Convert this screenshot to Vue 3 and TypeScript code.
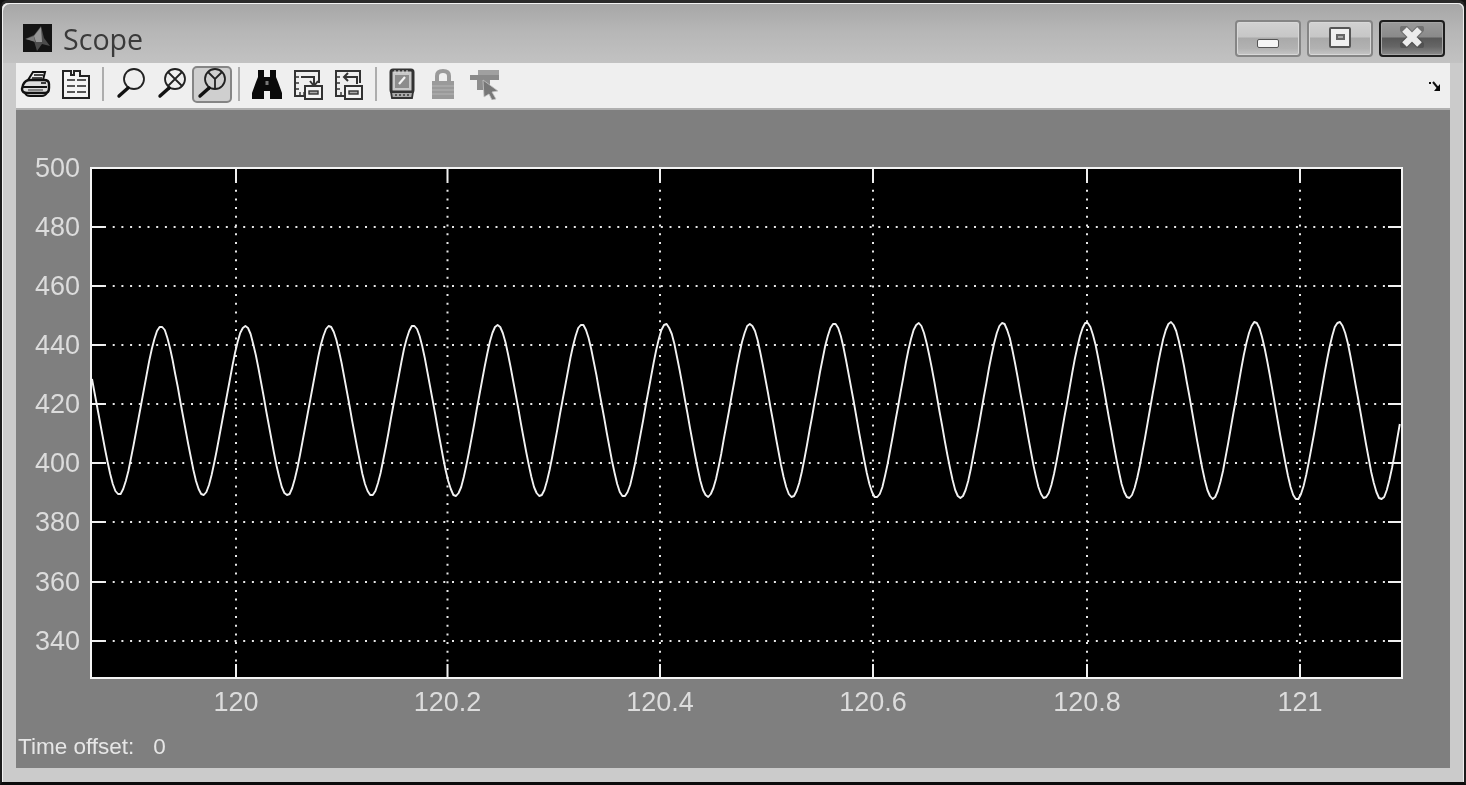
<script setup lang="ts">
const plot = { left: 91, right: 1402, top: 168, bottom: 678 };
const xTicks = [
  { x: 236, label: '120' },
  { x: 447.5, label: '120.2' },
  { x: 660, label: '120.4' },
  { x: 873, label: '120.6' },
  { x: 1087, label: '120.8' },
  { x: 1300, label: '121' },
];
const yTicks = [
  { y: 168, label: '500' },
  { y: 227, label: '480' },
  { y: 286, label: '460' },
  { y: 345, label: '440' },
  { y: 404, label: '420' },
  { y: 463, label: '400' },
  { y: 522, label: '380' },
  { y: 582, label: '360' },
  { y: 641, label: '340' },
];
function buildWave(): string {
  const pts: string[] = [];
  for (let x = plot.left + 1; x <= plot.right - 1; x += 2.6) {
    const t = (x - plot.left) / (plot.right - plot.left);
    const amp = 84 + 5 * t;
    const th = (2 * Math.PI * (x - 161)) / 84.15;
    const y = 410.5 - (amp * (Math.cos(th) + 0.035 * Math.cos(3 * th))) / 1.035;
    pts.push(`${x.toFixed(1)},${Math.round(y)}`);
  }
  return pts.join(' ');
}
const wave = buildWave();
</script>

<template>
  <div class="window">
    <header class="titlebar">
      <svg class="app-icon" viewBox="0 0 29 28" width="29" height="28">
        <rect width="29" height="28" fill="#141414" />
        <path d="M2 15 L11 11 L18 2 L21 14 L27 22 L19 20 L14 27 L11 17 Z" fill="#4c4c4c" />
        <path d="M11 12 L18 3 L19 18 L13 18 Z" fill="#969696" />
        <path d="M3 15 L11 12 L12 18 Z" fill="#7c7c7c" />
      </svg>
      <span class="title">Scope</span>
      <div class="controls">
        <button class="ctl">
          <span class="min-glyph"></span>
        </button>
        <button class="ctl">
          <span class="max-glyph"><span class="max-inner"></span></span>
        </button>
        <button class="ctl close">
          <svg viewBox="0 0 24 22" width="24" height="22">
            <path d="M4 3 L20 19 M20 3 L4 19" stroke="#333" stroke-width="8.5" stroke-linecap="round" opacity=".35" />
            <path d="M4.5 3.5 L19.5 18.5 M19.5 3.5 L4.5 18.5" stroke="#ececec" stroke-width="6.5" />
          </svg>
        </button>
      </div>
    </header>

    <nav class="toolbar">
      <span class="tool first">
        <svg viewBox="0 0 32 32" width="32" height="32" fill="none" stroke="#111">
          <path d="M9 12 L14 4 H26 L24 12" stroke-width="2" fill="#eee" />
          <path d="M15 7 H24 M13 10 H23" stroke-width="1.3" />
          <path d="M4 17 Q6 12 11 12 H25 Q30 12 30 16 V20 Q30 25 26 25 H8 Q3 25 3 21 Z" stroke-width="2.4" fill="#ddd" />
          <path d="M4 19 H28" stroke-width="2" />
          <path d="M9 22 H24" stroke-width="1.5" stroke="#666" />
          <path d="M22 15 H27" stroke-width="1.6" />
          <path d="M6 25 Q7 28 11 28 H23 Q26 28 28 25" stroke-width="2" />
        </svg>
      </span>
      <span class="tool">
        <svg viewBox="0 0 32 32" width="32" height="32" fill="none" stroke="#222" stroke-width="2">
          <path d="M3 3 H11 V7 H14 V3 H20 V8 H29 V30 H3 Z" fill="#f4f4f4" />
          <path d="M7 12 H15 M7 18 H15 M7 24 H15 M17 12 H26 M17 18 H26 M17 24 H26" stroke-width="1.6" />
        </svg>
      </span>
      <span class="sep"></span>
      <span class="tool">
        <svg viewBox="0 0 32 32" width="32" height="32" fill="none" stroke="#222">
          <circle cx="19" cy="11" r="10" stroke-width="1.8" />
          <path d="M13 20 L4 28" stroke-width="3.4" stroke="#111" stroke-linecap="round" />
        </svg>
      </span>
      <span class="tool">
        <svg viewBox="0 0 32 32" width="32" height="32" fill="none" stroke="#222">
          <circle cx="19" cy="11" r="10" stroke-width="1.8" />
          <path d="M12 4 L26 18 M26 4 L12 18" stroke-width="1.8" />
          <path d="M13 20 L4 28" stroke-width="3.4" stroke="#111" stroke-linecap="round" />
        </svg>
      </span>
      <span class="tool active">
        <svg viewBox="0 0 32 32" width="32" height="32" fill="none" stroke="#222">
          <circle cx="19" cy="11" r="10" stroke-width="1.8" />
          <path d="M12 4 L19 11 L26 4 M19 11 V21" stroke-width="1.8" />
          <path d="M13 20 L4 28" stroke-width="3.4" stroke="#111" stroke-linecap="round" />
        </svg>
      </span>
      <span class="sep"></span>
      <span class="tool">
        <svg viewBox="0 0 32 32" width="32" height="32">
          <path d="M7 2 H13 V9 H19 V2 H25 V9 L27 14 L31 25 V31 H19 V23 H13 V31 H1 V25 L5 14 L7 9 Z" fill="#0a0a0a" />
          <path d="M14.5 13 H17.5 V17 H14.5 Z" fill="#777" />
        </svg>
      </span>
      <span class="tool">
        <svg viewBox="0 0 32 32" width="32" height="32" fill="none" stroke="#333">
          <path d="M12 28 H3 V3 H27 V15" stroke-width="2" />
          <path d="M3 9 H7 M3 15 H7 M3 21 H7 M8 24 V28 M12 24 V28" stroke-width="1.4" />
          <path d="M9 9 H22 V17 M18 13 L22 18 L26 13" stroke-width="2" />
          <rect x="13" y="18" width="17" height="13" stroke-width="2" fill="#f4f4f4" />
          <rect x="17" y="23" width="9" height="3" stroke-width="1.4" fill="#aaa" />
        </svg>
      </span>
      <span class="tool">
        <svg viewBox="0 0 32 32" width="32" height="32" fill="none" stroke="#333">
          <path d="M12 28 H3 V3 H27 V15" stroke-width="2" />
          <path d="M3 9 H7 M3 15 H7 M3 21 H7 M8 24 V28 M12 24 V28" stroke-width="1.4" />
          <path d="M24 16 V9 H11 M15 5 L11 9 L15 13" stroke-width="2" />
          <rect x="12" y="18" width="17" height="13" stroke-width="2" fill="#f4f4f4" />
          <rect x="16" y="23" width="9" height="3" stroke-width="1.4" fill="#aaa" />
        </svg>
      </span>
      <span class="sep"></span>
      <span class="tool tight">
        <svg viewBox="0 0 32 32" width="32" height="32" fill="none" stroke="#333">
          <rect x="5" y="2" width="22" height="22" stroke-width="3" rx="2" fill="#c8c8c8" />
          <rect x="9" y="7" width="14" height="13" fill="#8c8c8c" stroke="none" />
          <path d="M13 16 L19 9" stroke="#f4f4f4" stroke-width="2.2" />
          <path d="M5 24 H27 L26 30 H6 Z" fill="#aaa" stroke-width="1.8" />
          <path d="M9 27 H23" stroke="#555" stroke-width="2" stroke-dasharray="2 2" />
          <path d="M9 2 V5 M13 2 V5 M17 2 V5 M21 2 V5" stroke-width="1" stroke="#ddd" />
        </svg>
      </span>
      <span class="tool tight">
        <svg viewBox="0 0 32 32" width="32" height="32" fill="none">
          <path d="M10 14 V8 Q10 3 16 3 Q22 3 22 8 V14" stroke="#9a9a9a" stroke-width="4" />
          <rect x="5" y="13" width="22" height="18" fill="#9a9a9a" />
          <path d="M5 18 H27 M5 22 H27 M5 26 H27" stroke="#b4b4b4" stroke-width="1" />
        </svg>
      </span>
      <span class="tool tight">
        <svg viewBox="0 0 32 32" width="32" height="32">
          <path d="M10 2 H31 V8 H10 Z" fill="#a0a0a0" />
          <path d="M2 7 H31 V12 H2 Z" fill="#8a8a8a" />
          <path d="M9 12 H22 V22 H9 Z" fill="#8e8e8e" />
          <path d="M15 12 L30 23 L24 24 L28 31 L24 32 L21 26 L16 29 Z" fill="#777" stroke="#c4c4c4" stroke-width="0.8" />
        </svg>
      </span>
      <span class="spacer"></span>
      <svg class="undock" viewBox="0 0 14 12" width="14" height="12">
        <path d="M1 2 L3 2 M5 1 L10 7" stroke="#111" stroke-width="2" fill="none" />
        <path d="M12 3 V10 H6 Z" fill="#0a0a0a" />
      </svg>
    </nav>

    <main class="panel">
      <svg class="plot" viewBox="16 110 1434 622" width="1434" height="622">
        <rect :x="plot.left" :y="plot.top" :width="plot.right - plot.left" :height="plot.bottom - plot.top" fill="#000" />
        <g stroke="#e8e8e8" stroke-width="2" fill="none">
          <line
            v-for="t in yTicks.slice(1)"
            :key="'g' + t.label"
            :x1="plot.left + 13"
            :y1="t.y"
            :x2="plot.right - 13"
            :y2="t.y"
            stroke-dasharray="2 6.7"
          />
          <line
            v-for="t in xTicks"
            :key="'v' + t.label"
            :x1="t.x"
            :y1="plot.top + 13"
            :x2="t.x"
            :y2="plot.bottom - 13"
            stroke-dasharray="2 6.7"
          />
        </g>
        <polyline :points="wave" fill="none" stroke="#f2f2f2" stroke-width="1.9" stroke-linejoin="round" />
        <g stroke="#f0f0f0" stroke-width="2">
          <template v-for="t in yTicks.slice(1)" :key="'ty' + t.label">
            <line :x1="plot.left" :y1="t.y" :x2="plot.left + 13" :y2="t.y" />
            <line :x1="plot.right - 14" :y1="t.y" :x2="plot.right" :y2="t.y" />
          </template>
          <template v-for="t in xTicks" :key="'tx' + t.label">
            <line :x1="t.x" :y1="plot.top" :x2="t.x" :y2="plot.top + 13" />
            <line :x1="t.x" :y1="plot.bottom - 14" :x2="t.x" :y2="plot.bottom" />
          </template>
        </g>
        <rect
          :x="plot.left"
          :y="plot.top"
          :width="plot.right - plot.left"
          :height="plot.bottom - plot.top"
          fill="none"
          stroke="#f4f4f4"
          stroke-width="2"
        />
        <g class="labels">
          <text v-for="t in yTicks" :key="'ly' + t.label" x="80" :y="t.y + 9" text-anchor="end">{{ t.label }}</text>
          <text v-for="t in xTicks" :key="'lx' + t.label" :x="t.x" y="711" text-anchor="middle">{{ t.label }}</text>
        </g>
      </svg>
      <div class="status">
        <span>Time offset:</span>
        <span class="offset">0</span>
      </div>
    </main>
  </div>
</template>

<style scoped>
.window {
  width: 1466px;
  height: 785px;
  box-sizing: border-box;
  display: flex;
  flex-direction: column;
  padding: 0 14px 14px;
  background: #cbcbcb;
  border-style: solid;
  border-color: #2a2a2a #1c1c1c #0c0c0c #1c1c1c;
  border-width: 3px 2px 3px 2px;
  border-radius: 8px 8px 0 0;
  box-shadow: inset 1px 1px 0 #f2f2f2, inset -1px 0 0 #eeeeee;
  filter: blur(0.5px);
}
.titlebar {
  height: 60px;
  margin: 0 -14px;
  padding: 0 19px 0 21px;
  display: flex;
  align-items: flex-start;
  background: linear-gradient(180deg, #a6a6a6 0%, #b6b6b6 45%, #c2c2c2 100%);
  border-radius: 7px 7px 0 0;
  box-shadow: inset 1px 1px 0 #f2f2f2, inset -1px 0 0 #eeeeee;
}
.app-icon {
  margin-top: 21px;
  flex: none;
}
.title {
  margin: 17px 0 0 11px;
  font-family: "Open Sans", sans-serif;
  font-size: 28.6px;
  line-height: 38px;
  color: #3a3a3a;
}
.controls {
  margin-left: auto;
  margin-top: 17px;
  display: flex;
  gap: 6px;
}
.ctl {
  width: 66px;
  height: 37px;
  padding: 0;
  box-sizing: border-box;
  display: flex;
  align-items: center;
  justify-content: center;
  border: 2px solid #858585;
  border-radius: 4px;
  background: linear-gradient(180deg, #d2d2d2 0%, #c6c6c6 46%, #a9a9a9 48%, #b2b2b2 80%, #c6c6c6 100%);
  box-shadow: inset 0 0 0 1px #d8d8d8;
}
.close {
  border-color: #1e1e1e;
  background: linear-gradient(180deg, #9a9a9a 0%, #8a8a8a 46%, #585858 48%, #666 75%, #8c8c8c 100%);
  box-shadow: inset 0 0 0 1px #a6a6a6;
}
.min-glyph {
  display: block;
  width: 22px;
  height: 9px;
  margin-top: 10px;
  box-sizing: border-box;
  background: #f4f4f4;
  border: 1px solid #555;
  border-radius: 2px;
}
.max-glyph {
  display: flex;
  align-items: center;
  justify-content: center;
  width: 22px;
  height: 21px;
  margin-top: -3px;
  box-sizing: border-box;
  background: #f0f0f0;
  border: 2px solid #555;
  border-radius: 2px;
}
.max-inner {
  display: block;
  width: 9px;
  height: 6px;
  box-sizing: border-box;
  border: 2px solid #666;
  background: #aaa;
}
.close svg {
  margin-top: -3px;
}
.toolbar {
  height: 47px;
  flex: none;
  display: flex;
  align-items: center;
  box-sizing: border-box;
  padding: 0 8px 3px 0;
  background: #efefef;
  border-bottom: 2px solid #b0b0b0;
  box-shadow: 0 1px 0 #f4f4f4;
}
.tool {
  width: 41px;
  height: 37px;
  display: flex;
  align-items: center;
  justify-content: center;
  flex: none;
  box-sizing: border-box;
}
.tool.first {
  margin-left: -2px;
}
.sep + .tool.tight {
  margin-left: -2px;
}
.tool.active {
  width: 40px;
  background: #cfcfcf;
  border: 2px solid #858585;
  border-radius: 5px;
}
.sep {
  flex: none;
  width: 2px;
  height: 34px;
  margin: 0 6px;
  background: #adadad;
}
.spacer {
  flex: 1;
}
.undock {
  margin-top: 6px;
  flex: none;
}
.panel {
  flex: 1;
  display: flex;
  flex-direction: column;
  background: #7f7f7f;
  min-height: 0;
}
.plot {
  display: block;
  flex: none;
}
.labels text {
  font-family: "Liberation Sans", sans-serif;
  font-size: 27px;
  fill: #dcdcdc;
}
.status {
  height: 36px;
  box-sizing: border-box;
  padding: 2px 0 0 2px;
  display: flex;
  font-family: "Liberation Sans", sans-serif;
  font-size: 22.5px;
  line-height: 26px;
  color: #e6e6e6;
}
.offset {
  margin-left: 19px;
}
</style>

<style>
html, body {
  margin: 0;
  background: #111;
}
</style>
